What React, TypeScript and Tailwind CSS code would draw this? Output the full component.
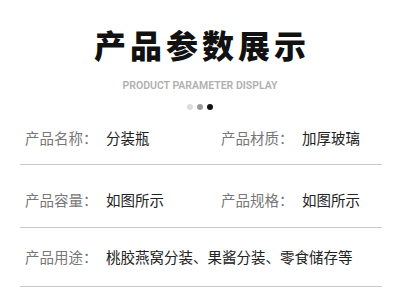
const rows = [
  { pt: "pt-[18px]", pb: "pb-[16px]", cells: [["产品名称：", "分装瓶"], ["产品材质：", "加厚玻璃"]] },
  { pt: "pt-[25px]", pb: "pb-[17px]", cells: [["产品容量：", "如图所示"], ["产品规格：", "如图所示"]] },
  { pt: "pt-[19px]", pb: "pb-[19px]", cells: [["产品用途：", "桃胶燕窝分装、果酱分装、零食储存等"]] },
];

export default function App() {
  return (
    <div className="w-[400px] h-[290px] bg-white overflow-hidden font-['Noto_Sans_CJK_SC',sans-serif]">
      <div className="flex flex-col items-center pt-[26px]">
        <h1 className="text-[32px] leading-[36px] font-black tracking-[4px] text-[#111] pl-[4px]">产品参数展示</h1>
        <p className="mt-[18px] text-[10.5px] leading-[12px] font-semibold text-[#b0b0b0] font-['Roboto',sans-serif]">
          PRODUCT PARAMETER DISPLAY
        </p>
        <div className="mt-[12px] flex gap-[4px]">
          <span className="w-[6px] h-[6px] rounded-full bg-[#dcdcdc]"></span>
          <span className="w-[6px] h-[6px] rounded-full bg-[#9a9a9a]"></span>
          <span className="w-[6px] h-[6px] rounded-full bg-[#111]"></span>
        </div>
      </div>
      <div className="ml-[20px] w-[362px]">
        {rows.map((r, i) => (
          <div key={i} className={`flex border-b border-[#c8c8c8] pl-[5px] ${r.pt} ${r.pb} text-[14.5px] leading-[20px]`}>
            {r.cells.map(([label, value], j) => (
              <div key={j} className={`flex ${j === 0 && r.cells.length > 1 ? "w-[196px]" : ""}`}>
                <span className="w-[81px] text-[#777]">{label}</span>
                <span className="text-[#222]">{value}</span>
              </div>
            ))}
          </div>
        ))}
      </div>
    </div>
  );
}
